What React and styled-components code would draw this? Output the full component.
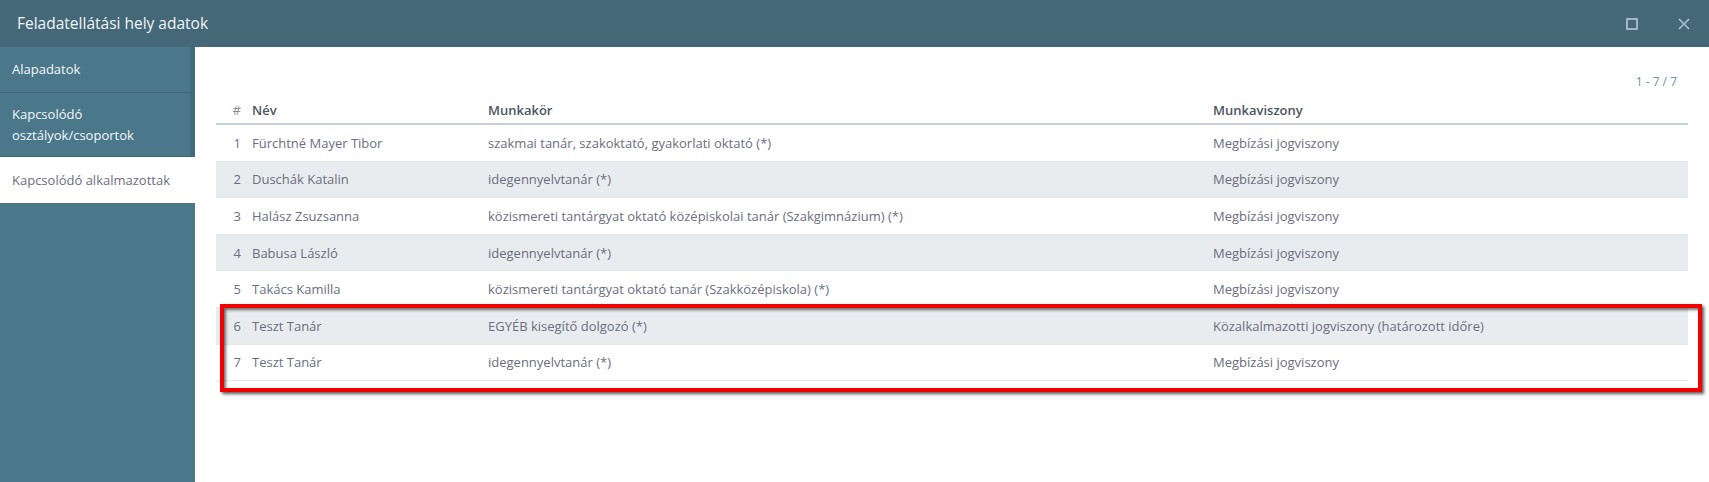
import React from "react";
import styled, { createGlobalStyle } from "styled-components";

const GlobalStyle = createGlobalStyle`
  html, body {
    margin: 0;
    padding: 0;
    background: #fff;
    font-family: "Open Sans", "Noto Sans", sans-serif;
  }
  #root {
    height: 482px;
  }
`

const Window = styled.div`
  width: 1709px;
  height: 482px;
  display: flex;
  flex-direction: column;
  overflow: hidden;
`

const TitleBar = styled.div`
  height: 47px;
  flex: none;
  background: #446878;
  display: flex;
  align-items: center;
  padding: 0 19px 0 17px;
  color: #f2f5f7;
  font-size: 15.5px;
`

const Title = styled.div`
  flex: 1;
  margin-top: -2px;
`

const Controls = styled.div`
  display: flex;
  align-items: center;
  gap: 40px;
  color: #a9c0ca;
`

const Body = styled.div`
  flex: 1;
  display: flex;
  min-height: 0;
`

const Sidebar = styled.div`
  width: 195px;
  flex: none;
  background: #4b778a;
  display: flex;
  flex-direction: column;
`

const NavItem = styled.div`
  box-sizing: border-box;
  height: ${p => p.$h}px;
  display: flex;
  align-items: center;
  padding: 0 12px;
  font-size: 13px;
  line-height: 21px;
  color: ${p => (p.$active ? "#6b6e80" : "#f3f6f8")};
  background: ${p => (p.$active ? "#fff" : "#4b778a")};
  border-right: ${p => (p.$active ? "none" : "5px solid #426c7d")};
  border-bottom: ${p => (p.$active ? "none" : "1px solid #3f6577")};
`

const Content = styled.div`
  flex: 1;
  position: relative;
  padding: 21px 21px 0 21px;
`

const Pager = styled.div`
  text-align: right;
  padding-right: 11px;
  font-size: 12px;
  color: #6d8ea2;
  height: 28px;
  line-height: 28px;
`

const Row = styled.div`
  display: grid;
  grid-template-columns: 32px 236px 725px 1fr;
  box-sizing: border-box;
  height: ${p => (p.$head ? "29px" : "36.6px")};
  align-items: center;
  font-size: 13px;
  color: ${p => (p.$head ? "#4c5561" : "#6b6e80")};
  font-weight: ${p => (p.$head ? 600 : 400)};
  background: ${p => (p.$alt ? "#e9ecef" : "#fff")};
  border-bottom: ${p => (p.$head ? "2px solid #c8d0d7" : "1px solid #e4e7ea")};
`

const Num = styled.div`
  text-align: right;
  padding-right: 7px;
  color: ${p => (p.$head ? "#8a8e99" : "#6b6e80")};
  font-weight: 400;
`

const Cell = styled.div`
  padding-left: 4px;
  white-space: nowrap;
`

const Highlight = styled.div`
  position: absolute;
  left: 25px;
  top: 257px;
  width: 1482px;
  height: 88px;
  box-sizing: border-box;
  border: 4px solid #f00000;
  box-shadow: 2px 2px 3px rgba(0, 0, 0, 0.65), inset 2px 2px 3px rgba(0, 0, 0, 0.55);
  pointer-events: none;
`

const rows = [
  ["Fürchtné Mayer Tibor", "szakmai tanár, szakoktató, gyakorlati oktató (*)", "Megbízási jogviszony"],
  ["Duschák Katalin", "idegennyelvtanár (*)", "Megbízási jogviszony"],
  ["Halász Zsuzsanna", "közismereti tantárgyat oktató középiskolai tanár (Szakgimnázium) (*)", "Megbízási jogviszony"],
  ["Babusa László", "idegennyelvtanár (*)", "Megbízási jogviszony"],
  ["Takács Kamilla", "közismereti tantárgyat oktató tanár (Szakközépiskola) (*)", "Megbízási jogviszony"],
  ["Teszt Tanár", "EGYÉB kisegítő dolgozó (*)", "Közalkalmazotti jogviszony (határozott időre)"],
  ["Teszt Tanár", "idegennyelvtanár (*)", "Megbízási jogviszony"],
];

const App = () => {
  return (
    <Window>
      <GlobalStyle />
      <TitleBar>
        <Title>Feladatellátási hely adatok</Title>
        <Controls>
          <svg width="12" height="12" viewBox="0 0 12 12">
            <rect x="1" y="1" width="10" height="10" fill="none" stroke="currentColor" strokeWidth="1.8" />
          </svg>
          <svg width="12" height="12" viewBox="0 0 12 12">
            <path d="M1 1 L11 11 M11 1 L1 11" stroke="currentColor" strokeWidth="1.6" />
          </svg>
        </Controls>
      </TitleBar>
      <Body>
        <Sidebar>
          <NavItem $h={46}>Alapadatok</NavItem>
          <NavItem $h={64}>Kapcsolódó<br />osztályok/csoportok</NavItem>
          <NavItem $h={46} $active>Kapcsolódó alkalmazottak</NavItem>
        </Sidebar>
        <Content>
          <Pager>1 - 7 / 7</Pager>
          <Row $head>
            <Num $head>#</Num>
            <Cell>Név</Cell>
            <Cell>Munkakör</Cell>
            <Cell>Munkaviszony</Cell>
          </Row>
          {rows.map((r, i) => (
            <Row key={i} $alt={i % 2 === 1}>
              <Num>{i + 1}</Num>
              <Cell>{r[0]}</Cell>
              <Cell>{r[1]}</Cell>
              <Cell>{r[2]}</Cell>
            </Row>
          ))}
          <Highlight />
        </Content>
      </Body>
    </Window>
  )
}

export default App;
